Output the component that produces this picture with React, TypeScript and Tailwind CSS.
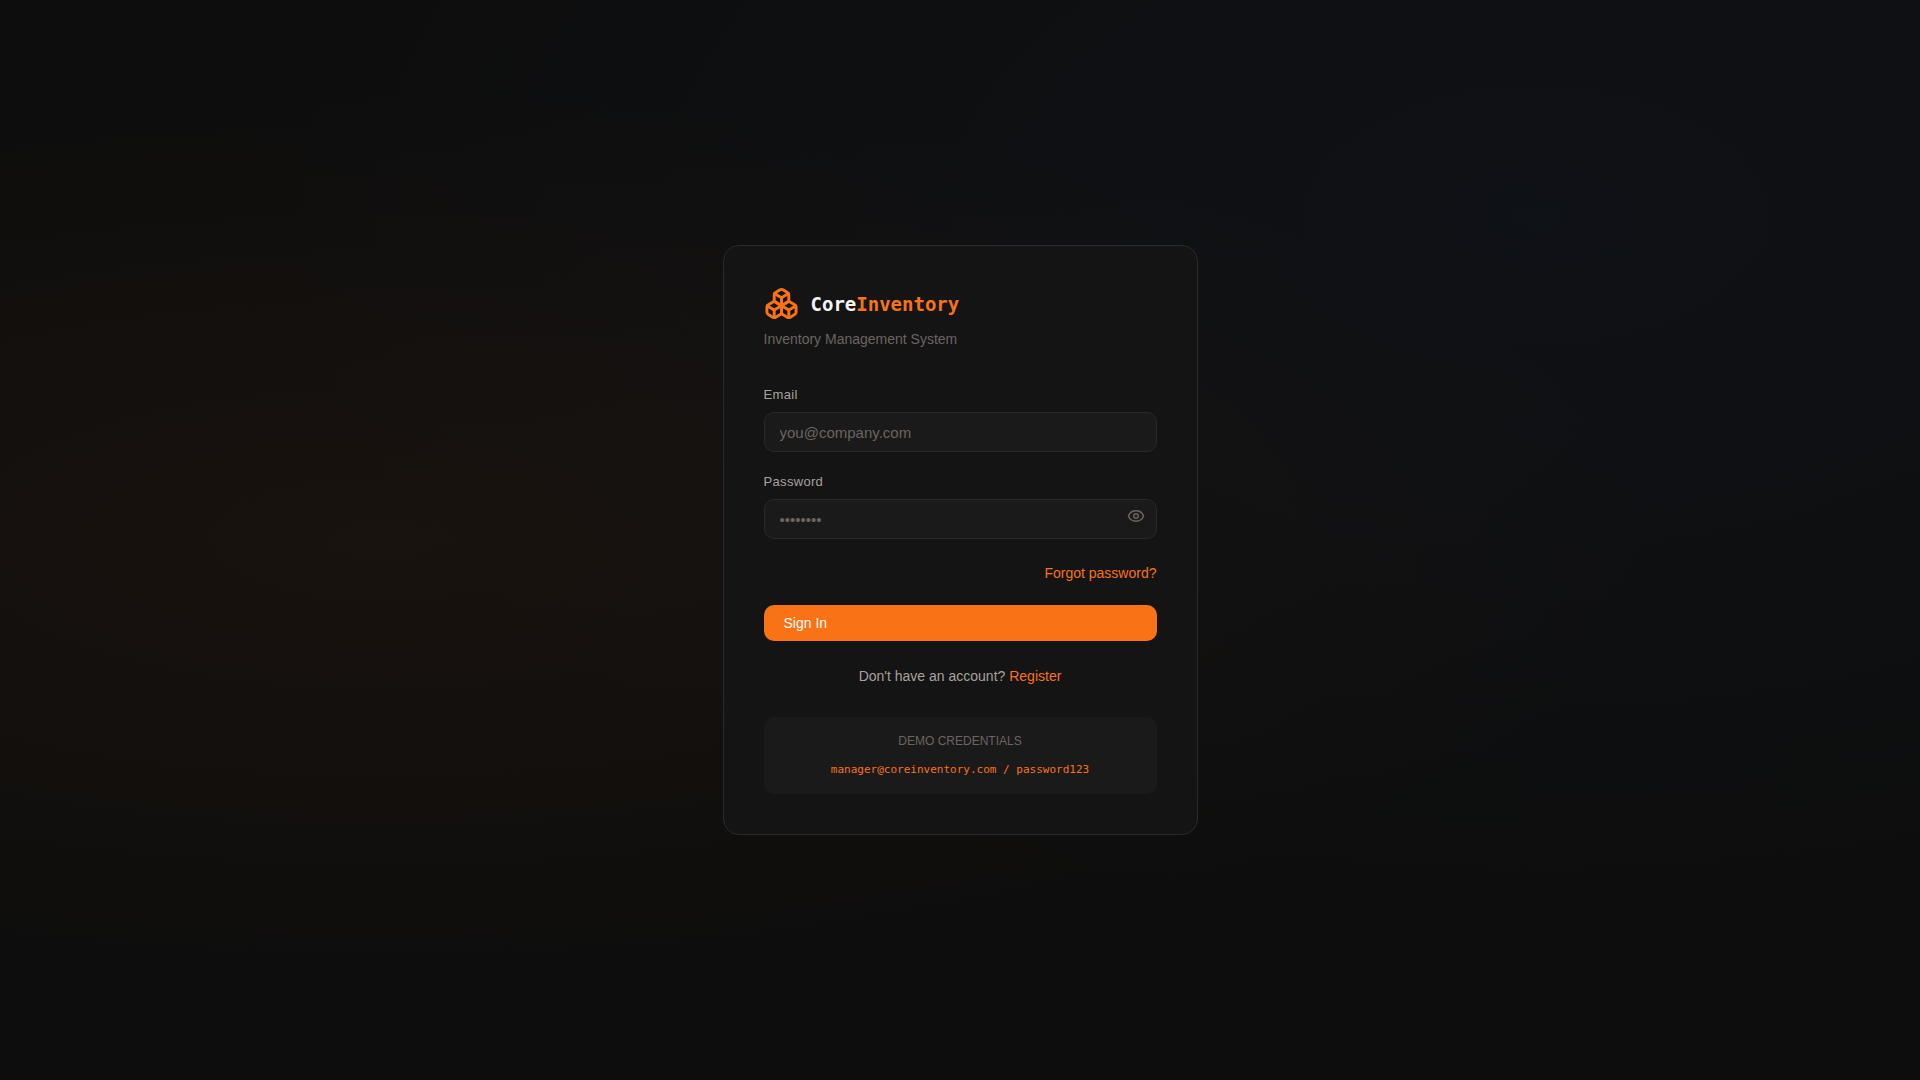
import { useState } from "react";
import { Boxes, Eye, EyeOff } from "lucide-react";

const LABEL_CLASS = "block mb-[7px] text-[13px] leading-5 font-medium tracking-wide text-[#a8a29e]";
const INPUT_CLASS =
  "block w-full h-10 px-[15px] rounded-[10px] border border-[#2a2a2a] bg-[#1a1a1a] text-[15px] text-[#f5f5f4] placeholder:text-[#6b6560] outline-none focus:border-[#f97316]";

export default function LoginPage() {
  const [email, setEmail] = useState("");
  const [password, setPassword] = useState("");
  const [showPassword, setShowPassword] = useState(false);

  return (
    <div className="min-h-screen flex items-center justify-center p-5 bg-[#0d0d0d] bg-[radial-gradient(ellipse_at_20%_50%,rgba(249,115,22,0.05)_0%,transparent_60%),radial-gradient(ellipse_at_80%_20%,rgba(59,130,246,0.04)_0%,transparent_60%)] font-['Liberation_Sans',sans-serif]">
      <main className="w-full max-w-[475px] p-10 rounded-2xl border border-[#2a2a2a] bg-[#141414]">
        <div className="flex items-center gap-3">
          <Boxes size={35} className="text-[#f97316]" />
          <h1 className="text-[19px] leading-7 font-bold text-[#f5f5f4] font-['DejaVu_Sans_Mono',monospace]">
            Core<span className="text-[#f97316]">Inventory</span>
          </h1>
        </div>
        <p className="mt-2 text-sm text-[#6b6560]">Inventory Management System</p>

        <form className="mt-9" onSubmit={(e) => e.preventDefault()}>
          <label htmlFor="email" className={LABEL_CLASS}>
            Email
          </label>
          <input
            id="email"
            type="email"
            placeholder="you@company.com"
            value={email}
            onChange={(e) => setEmail(e.target.value)}
            className={INPUT_CLASS}
          />

          <div className="mt-5">
            <label htmlFor="password" className={LABEL_CLASS}>
              Password
            </label>
            <div className="relative">
              <input
                id="password"
                type={showPassword ? "text" : "password"}
                placeholder="••••••••"
                value={password}
                onChange={(e) => setPassword(e.target.value)}
                className={INPUT_CLASS}
              />
              <button
                type="button"
                aria-label="Toggle password visibility"
                onClick={() => setShowPassword(!showPassword)}
                className="absolute right-3 top-2 text-[#6b6560]"
              >
                {showPassword ? <EyeOff size={18} /> : <Eye size={18} />}
              </button>
            </div>
          </div>

          <div className="mt-6 flex justify-end">
            <a href="#" className="text-sm text-[#f97316]">
              Forgot password?
            </a>
          </div>

          <button type="submit" className="mt-[22px] flex w-full h-9 items-center px-5 rounded-[10px] bg-[#f97316] text-sm font-medium text-white">
            Sign In
          </button>
        </form>

        <p className="mt-[25px] text-center text-sm text-[#a8a29e]">
          Don't have an account?{" "}
          <a href="#" className="text-[#f97316]">
            Register
          </a>
        </p>

        <div className="mt-[31px] p-4 rounded-[10px] bg-[#1a1a1a] text-center">
          <p className="text-xs text-[#6b6560]">DEMO CREDENTIALS</p>
          <code className="block mt-[13px] text-[11px] leading-4 text-[#f97316] font-['DejaVu_Sans_Mono',monospace]">
            manager@coreinventory.com / password123
          </code>
        </div>
      </main>
    </div>
  );
}
